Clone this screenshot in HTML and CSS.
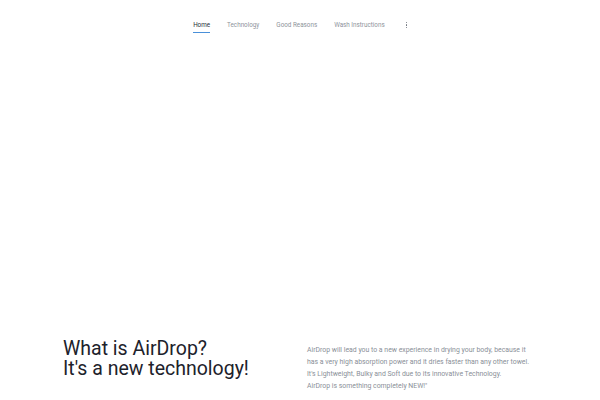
FILE: index.html
```html
<!DOCTYPE html>
<html>
<head>
<meta charset="utf-8">
<link rel="stylesheet" href="styles.css">
</head>
<body>
<header class="nav">
  <a class="nav-item active">Home</a>
  <a class="nav-item">Technology</a>
  <a class="nav-item">Good Reasons</a>
  <a class="nav-item">Wash Instructions</a>
  <span class="more"><i></i><i></i><i></i></span>
</header>
<main class="hero"></main>
<section class="intro">
  <h1 class="title"><span class="line">What is AirDrop?</span><span class="line">It's a new technology!</span></h1>
  <p class="text">AirDrop will lead you to a new experience in drying your body, because it has a very high absorption power and it dries faster than any other towel. It's Lightweight, Bulky and Soft due to its innovative Technology.<br>AirDrop is something completely NEW!"</p>
</section>
</body>
</html>
```
FILE: styles.css
```css
html, body { margin: 0; padding: 0; background: #fff; }
body { font-family: Roboto, "Liberation Sans", sans-serif; width: 600px; height: 400px; overflow: hidden; }
.nav { display: flex; justify-content: center; align-items: center; gap: 17px; padding-top: 19px; height: 12px; padding-left: 2px; }
.nav-item { font-size: 6.3px; color: #8e939b; position: relative; line-height: 10px; padding-bottom: 1px; }
.nav-item.active { color: #2a2f38; }
.nav-item.active::after { content: ""; position: absolute; left: 0; right: 0; bottom: -2px; height: 1px; background: #4a90d9; }
.more { display: flex; flex-direction: column; gap: 1px; margin-left: 2px; padding: 0 2px; }
.more i { display: block; width: 1.2px; height: 1.2px; border-radius: 50%; background: #6a6f78; }
.hero { height: 306px; }
.intro { display: flex; padding: 0 63px; gap: 0; }
.title { flex: 0 0 244px; margin: 2px 0 0; font-weight: 400; font-size: 19.5px; line-height: 20px; color: #1d222b; }
.line { display: block; }
.text { margin: 7px 0 0; width: 226px; font-size: 6.9px; line-height: 12px; color: #8a8f98; }
```
